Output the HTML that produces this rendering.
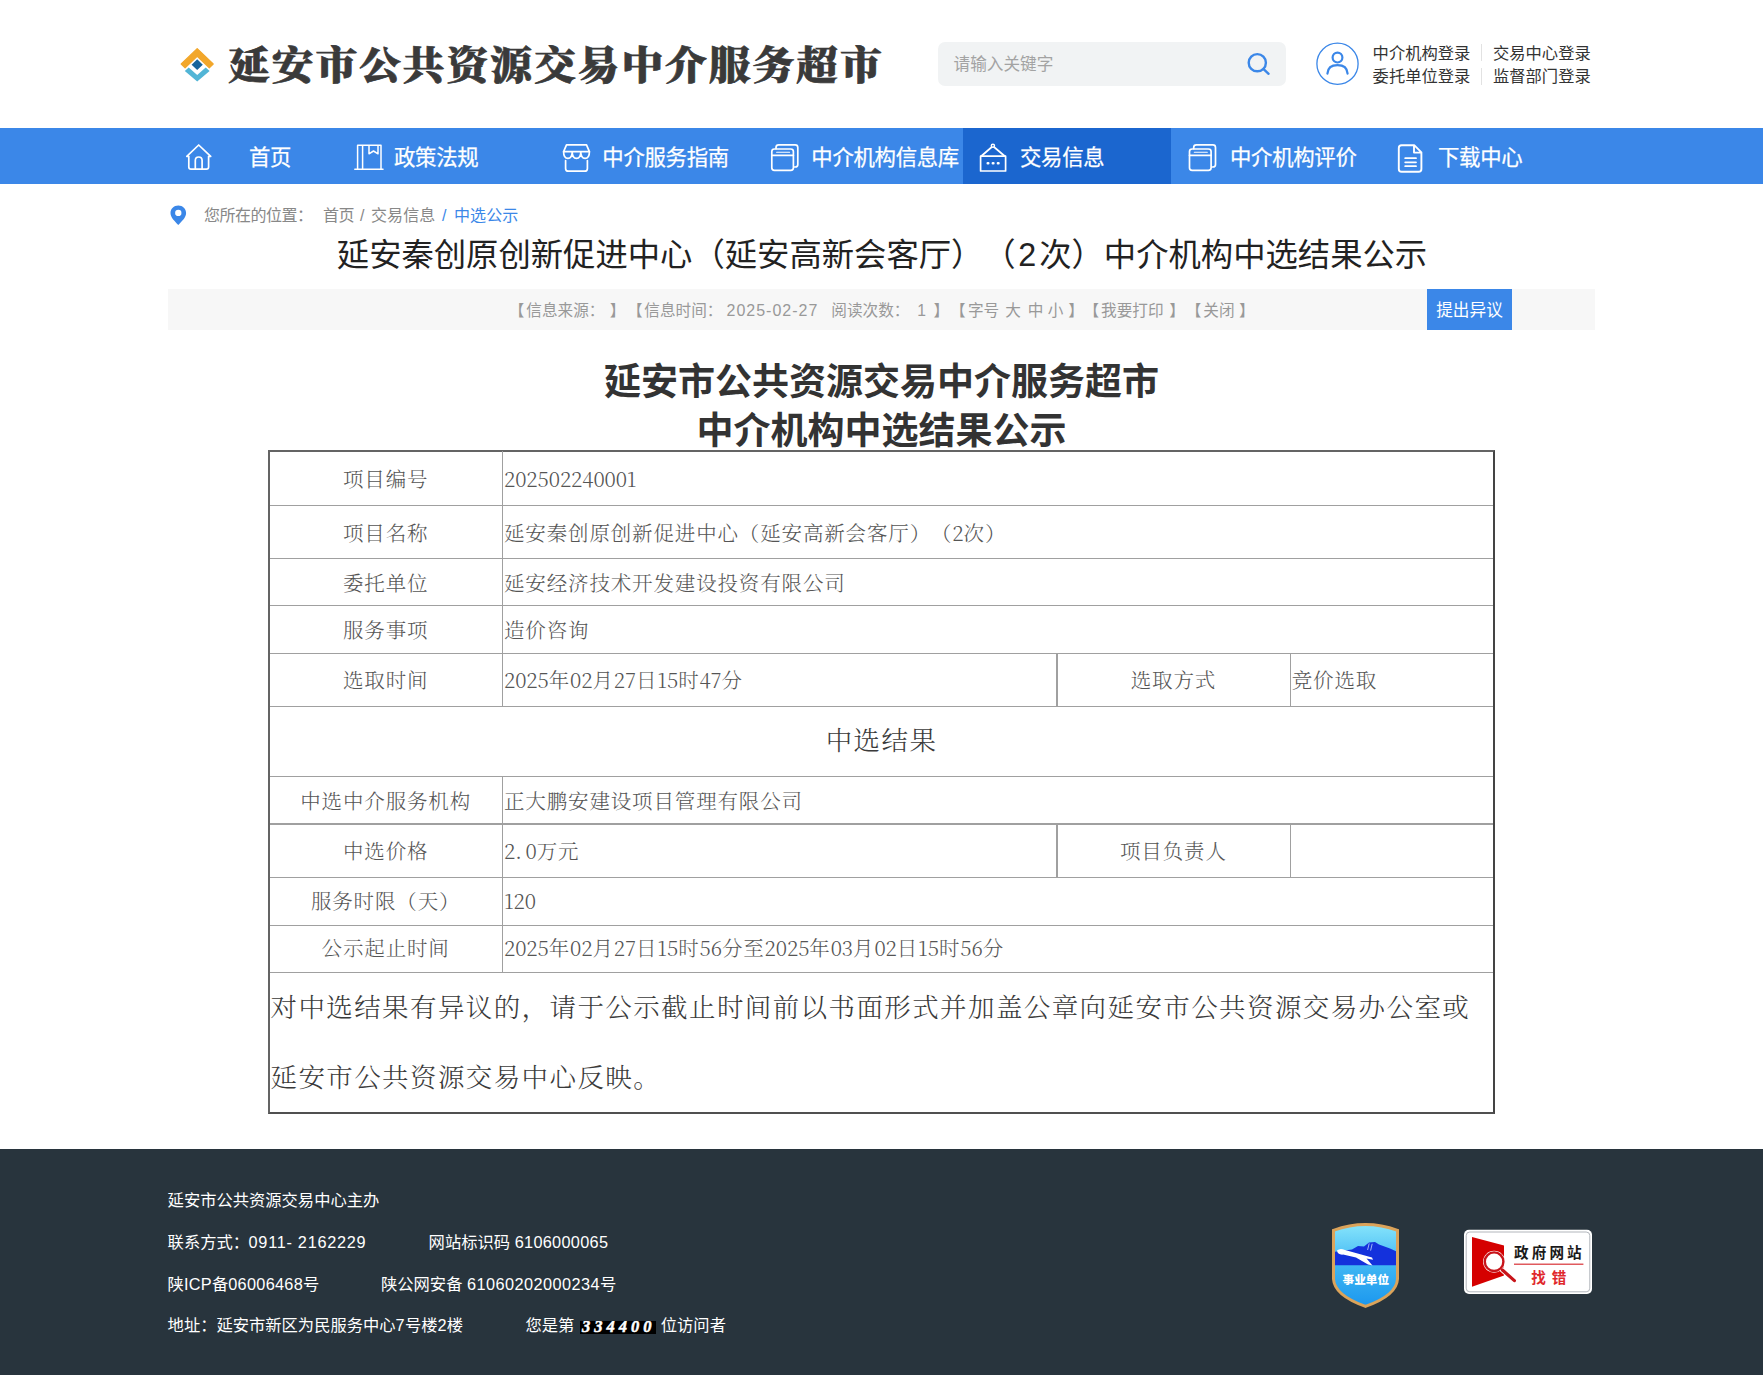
<!DOCTYPE html>
<html lang="zh-CN">
<head>
<meta charset="utf-8">
<title>延安市公共资源交易中介服务超市</title>
<style>
*{margin:0;padding:0;box-sizing:border-box;}
html,body{width:1763px;height:1375px;overflow:hidden;background:#fff;}
body{position:relative;font-family:"Liberation Sans","Noto Sans CJK SC",sans-serif;color:#333;}
.abs{position:absolute;white-space:nowrap;}
/* header */
#logo-ic{left:180px;top:47px;width:35px;height:38px;}
#logo-tx{left:227.6px;top:34px;font-family:"Liberation Serif","Noto Serif CJK SC",serif;font-weight:900;font-size:39px;line-height:64px;color:#3a3a3a;letter-spacing:1.85px;-webkit-text-stroke:0.7px #3a3a3a;transform:scaleX(1.07);transform-origin:0 0;}
#search{left:938px;top:42px;width:347.5px;height:44px;background:#f1f3f4;border-radius:7px;}
#search span{position:absolute;left:15.5px;top:1px;line-height:44px;font-size:16.65px;color:#a3a3a3;}
#search svg{position:absolute;left:307px;top:9px;}
#user{left:1314px;top:42px;width:44px;height:44px;}
.lg{font-size:16.3px;line-height:23px;color:#333;}
/* nav */
#nav{left:0;top:128px;width:1763px;height:55.6px;background:#3b87e8;}
#nav-act{left:962.8px;top:128px;width:208.7px;height:55.6px;background:#1b66cf;}
.nv{top:130px;line-height:56px;font-size:21.4px;color:#fff;letter-spacing:-0.3px;font-weight:400;-webkit-text-stroke:0.25px #fff;}
.ni{top:142px;width:30px;height:30px;}
/* crumbs */
.cr{top:205px;font-size:16px;line-height:22px;color:#888;letter-spacing:-0.5px;}
.cr.b{color:#3b87e8;}
#title{text-spacing-trim:space-all;left:336.8px;top:230px;font-size:32.35px;line-height:50px;color:#222;}
#bar{left:168px;top:288.7px;width:1427px;height:41.7px;background:#f7f7f7;}
.bt{top:289.5px;line-height:42px;font-size:15.65px;color:#999;text-spacing-trim:space-all;}
#btn{left:1427px;top:288.7px;width:85px;height:41.7px;background:#3b87e8;color:#fff;font-size:16.65px;line-height:43.5px;text-align:center;}
.h1{left:0;width:1763px;text-align:center;font-weight:700;font-size:37px;line-height:49px;color:#333;}
/* table */
#tb{left:268px;top:450px;width:1226.7px;height:663.8px;border:2px solid #555;border-color:#646464 #444 #505050 #646464;}
.hl{background:#a0a0a0;height:1.3px;left:270px;width:1223px;}
.vl{background:#a0a0a0;width:1.3px;}
.td{font-family:"Noto Serif CJK SC","Liberation Serif",serif;margin-top:1px;font-weight:300;font-size:20.5px;color:#555;letter-spacing:0.85px;text-spacing-trim:space-all;}
.tc{text-align:center;}
.d{letter-spacing:-0.1px;}
.big{font-family:"Liberation Serif","Noto Serif CJK SC",serif;font-weight:300;font-size:26.5px;color:#3a3a3a;letter-spacing:1.4px;text-spacing-trim:space-all;}
/* footer */
#foot{left:0;top:1148.7px;width:1763px;height:226.3px;background:#28343d;}
.ft{font-size:16.3px;color:#fff;line-height:24px;}
.n{letter-spacing:0.3px;}
</style>
</head>
<body>
<!-- HEADER -->
<svg id="logo-ic" class="abs" viewBox="0 0 35 38">
  <path d="M1.2 17 L17.2 1.6 L33.2 17 L29.3 20.8 L17.2 9.2 L5.1 20.8 Z" fill="#f2a72b" stroke="#f2a72b" stroke-width="1.2" stroke-linejoin="round"/>
  <path d="M17.2 12.3 L22.8 17.7 L17.2 23.1 L11.6 17.7 Z" fill="#17649b"/>
  <path d="M4.8 24 L8.7 20.4 L17.2 28 L25.7 20.4 L29.6 24 L17.2 34.6 Z" fill="#52b5d6"/>
</svg>
<div id="logo-tx" class="abs">延安市公共资源交易中介服务超市</div>
<div id="search" class="abs"><span>请输入关键字</span></div>
<svg class="abs" style="left:1244px;top:50px;" width="30" height="30" viewBox="0 0 30 30" fill="none" stroke="#3b87e8" stroke-width="2.4" stroke-linecap="round"><circle cx="13.3" cy="12.7" r="8.6"/><path d="M19.6 19.2 L24.6 23.8"/></svg>
<svg class="abs" style="left:1314px;top:40px;" width="48" height="48" viewBox="0 0 48 48" fill="none" stroke="#3b87e8"><circle cx="23.5" cy="23.75" r="20.6" stroke-width="1.3"/><circle cx="23.5" cy="17.6" r="4.9" stroke-width="2.2"/><path d="M13.4 33.6 C13.8 27.8 18 25.2 23.5 25.2 C29 25.2 33.2 27.8 33.6 33.6" stroke-width="2.2" stroke-linecap="round"/></svg>
<div class="abs lg" style="left:1372.6px;top:42px;">中介机构登录</div>
<div class="abs lg" style="left:1493px;top:42px;">交易中心登录</div>
<div class="abs lg" style="left:1372.6px;top:65.3px;">委托单位登录</div>
<div class="abs lg" style="left:1493px;top:65.3px;">监督部门登录</div>
<div class="abs" style="left:1481.3px;top:44px;width:1px;height:17px;background:#e2e2e2;"></div>
<div class="abs" style="left:1481.3px;top:67.5px;width:1px;height:17px;background:#e2e2e2;"></div>

<!-- NAV -->
<div id="nav" class="abs"></div>
<div id="nav-act" class="abs"></div>
<svg class="abs" style="left:0;top:128px;" width="1763" height="56" viewBox="0 128 1763 56" fill="none" stroke="#fff" stroke-width="1.7" stroke-linejoin="round" stroke-linecap="round">
  <!-- home -->
  <path d="M198.7 145 L210.7 156.3 L208.6 156.3 L208.6 167 Q208.6 169.2 206.4 169.2 L191 169.2 Q188.8 169.2 188.8 167 L188.8 156.3 L186.8 156.3 Z"/>
  <path d="M195.3 169 L195.3 160.5 Q195.3 157 198.7 157 Q202.1 157 202.1 160.5 L202.1 169"/>
  <!-- book -->
  <path d="M354.8 169.3 L383 169.3 M357.6 169 L357.6 145.2 L381 145.2 L381 169 M362.6 145.2 L362.6 169 M369 145.4 L369 153.8 L373.5 151 L378 153.8 L378 145.4" stroke-width="1.5"/>
  <!-- shop -->
  <path d="M566.5 144.8 L586.5 144.8 L589.4 151.6 L563.6 151.6 Z"/>
  <path d="M563.6 151.8 Q563.6 158.4 567.9 158.4 Q572.2 158.4 572.2 151.8 Q572.2 158.4 576.5 158.4 Q580.8 158.4 580.8 151.8 Q580.8 158.4 585.1 158.4 Q589.4 158.4 589.4 151.8"/>
  <path d="M565.6 160.5 L565.6 168.4 Q565.6 171.2 568.4 171.2 L584.6 171.2 Q587.4 171.2 587.4 168.4 L587.4 160.5"/>
  <!-- window 1 -->
  <g id="win"><rect x="771.8" y="149" width="21.6" height="21.4" rx="2.6"/><path d="M771.8 155.3 L793.4 155.3"/><path d="M776 148.6 L776 147.4 Q776 144.8 778.6 144.8 L795.2 144.8 Q797.8 144.8 797.8 147.4 L797.8 164.4 Q797.8 167 795.2 167 L794 167"/><path d="M776.6 152.2 L789.6 152.2" stroke-width="1.1"/></g>
  <!-- sign -->
  <circle cx="992.9" cy="145.8" r="1.6" stroke-width="1.4"/>
  <path d="M991.8 147 L981.4 156 M994 147 L1004.6 156"/>
  <path d="M980.6 156.2 L1005.6 156.2 L1005.6 171 L980.6 171 Z"/>
  <path d="M987.7 163.3 L988.3 163.3 M992.8 163.3 L993.4 163.3 M997.9 163.3 L998.5 163.3" stroke-width="2.5"/>
  <!-- window 2 -->
  <g transform="translate(417.7 0)"><rect x="771.8" y="149" width="21.6" height="21.4" rx="2.6"/><path d="M771.8 155.3 L793.4 155.3"/><path d="M776 148.6 L776 147.4 Q776 144.8 778.6 144.8 L795.2 144.8 Q797.8 144.8 797.8 147.4 L797.8 164.4 Q797.8 167 795.2 167 L794 167"/><path d="M776.6 152.2 L789.6 152.2" stroke-width="1.1"/></g>
  <!-- doc -->
  <path d="M1401.6 145.2 L1414.2 145.2 L1421.4 152.4 L1421.4 169 Q1421.4 171.8 1418.6 171.8 L1401.6 171.8 Q1398.8 171.8 1398.8 169 L1398.8 148 Q1398.8 145.2 1401.6 145.2 Z M1414 145.6 L1414 152.6 L1421 152.6" stroke-width="1.9"/>
  <path d="M1405.2 158.2 L1416 158.2 M1405.2 162.3 L1416 162.3 M1405.2 166.2 L1416 166.2" stroke-width="1.8"/>
</svg>
<div class="abs nv" style="left:249px;">首页</div>
<div class="abs nv" style="left:394px;">政策法规</div>
<div class="abs nv" style="left:602.3px;">中介服务指南</div>
<div class="abs nv" style="left:811.3px;">中介机构信息库</div>
<div class="abs nv" style="left:1020px;">交易信息</div>
<div class="abs nv" style="left:1230px;">中介机构评价</div>
<div class="abs nv" style="left:1438px;">下载中心</div>

<!-- BREADCRUMB / TITLE -->
<svg class="abs" style="left:168.7px;top:203.5px;" width="18.6" height="22.3" viewBox="0 0 20 24"><path d="M10 1.5 C5.2 1.5 1.6 5 1.6 9.6 C1.6 14.6 6.5 18.6 10 22.6 C13.5 18.6 18.4 14.6 18.4 9.6 C18.4 5 14.8 1.5 10 1.5 Z" fill="#3b87e8"/><circle cx="10" cy="9.6" r="3.4" fill="#fff"/></svg>
<div class="abs cr" style="left:204px;">您所在的位置：</div><div class="abs cr" style="left:323px;">首页</div><div class="abs cr" style="left:360px;">/</div><div class="abs cr" style="left:371px;letter-spacing:0.1px;">交易信息</div><div class="abs cr b" style="left:442px;">/</div><div class="abs cr b" style="left:454px;letter-spacing:0.1px;">中选公示</div>
<div id="title" class="abs">延安秦创原创新促进中心（延安高新会客厅）（<span style="margin:0 3px 0 2.5px;">2</span>次）中介机构中选结果公示</div>
<div id="bar" class="abs"></div>
<div class="abs bt" style="left:508.7px;">【</div><div class="abs bt" style="left:526.3px;">信息来源：</div><div class="abs bt" style="left:609.7px;">】</div><div class="abs bt" style="left:627.0px;">【</div><div class="abs bt" style="left:644.3px;">信息时间：</div><div class="abs bt" style="left:726.5px;"><span style="letter-spacing:1px;font-size:16px;">2025-02-27</span></div><div class="abs bt" style="left:831.3px;">阅读次数：</div><div class="abs bt" style="left:917.3px;">1</div><div class="abs bt" style="left:933.4px;">】</div><div class="abs bt" style="left:950.0px;">【</div><div class="abs bt" style="left:967.9px;">字号</div><div class="abs bt" style="left:1005.3px;">大</div><div class="abs bt" style="left:1027.8px;">中</div><div class="abs bt" style="left:1047.8px;">小</div><div class="abs bt" style="left:1068.2px;">】</div><div class="abs bt" style="left:1083.4px;">【</div><div class="abs bt" style="left:1101.0px;">我要打印</div><div class="abs bt" style="left:1169.2px;">】</div><div class="abs bt" style="left:1185.7px;">【</div><div class="abs bt" style="left:1203.3px;">关闭</div><div class="abs bt" style="left:1239.1px;">】</div>
<div id="btn" class="abs">提出异议</div>
<div class="abs h1" style="top:357.6px;">延安市公共资源交易中介服务超市</div>
<div class="abs h1" style="top:406.8px;">中介机构中选结果公示</div>

<!-- TABLE -->
<div id="tb" class="abs"></div>
<div class="abs hl" style="top:504.85px;"></div>
<div class="abs hl" style="top:557.85px;"></div>
<div class="abs hl" style="top:605.15px;"></div>
<div class="abs hl" style="top:652.65px;"></div>
<div class="abs hl" style="top:705.65px;"></div>
<div class="abs hl" style="top:775.75px;"></div>
<div class="abs hl" style="top:823.35px;"></div>
<div class="abs hl" style="top:876.75px;"></div>
<div class="abs hl" style="top:924.55px;"></div>
<div class="abs hl" style="top:971.65px;"></div>
<div class="abs vl" style="left:501.8px;top:451.3px;height:255.1px;"></div>
<div class="abs vl" style="left:501.8px;top:776.5px;height:195.5px;"></div>
<div class="abs vl" style="left:1056.3px;top:653.0px;height:53.4px;"></div>
<div class="abs vl" style="left:1289.5px;top:653.0px;height:53.4px;"></div>
<div class="abs vl" style="left:1056.3px;top:824.0px;height:53.0px;"></div>
<div class="abs vl" style="left:1289.5px;top:824.0px;height:53.0px;"></div>
<div class="abs td tc" style="left:269.0px;width:233.3px;top:451.3px;line-height:53.7px;">项目编号</div>
<div class="abs td" style="left:504.0px;top:451.3px;line-height:53.7px;"><span class="d">202502240001</span></div>
<div class="abs td tc" style="left:269.0px;width:233.3px;top:505.0px;line-height:53.7px;">项目名称</div>
<div class="abs td" style="left:504.0px;top:505.0px;line-height:53.7px;">延安秦创原创新促进中心（延安高新会客厅）（<span class="d">2</span>次）</div>
<div class="abs td tc" style="left:269.0px;width:233.3px;top:557.7px;line-height:47.3px;">委托单位</div>
<div class="abs td" style="left:504.0px;top:557.7px;line-height:47.3px;">延安经济技术开发建设投资有限公司</div>
<div class="abs td tc" style="left:269.0px;width:233.3px;top:604.5px;line-height:47.0px;">服务事项</div>
<div class="abs td" style="left:504.0px;top:604.5px;line-height:47.0px;">造价咨询</div>
<div class="abs td tc" style="left:269.0px;width:233.3px;top:651.6px;line-height:53.4px;">选取时间</div>
<div class="abs td" style="left:504.0px;top:651.6px;line-height:53.4px;"><span class="d">2025</span>年<span class="d">02</span>月<span class="d">27</span>日<span class="d">15</span>时<span class="d">47</span>分</div>
<div class="abs td tc" style="left:1056.8px;width:233.2px;top:651.6px;line-height:53.4px;">选取方式</div>
<div class="abs td" style="left:1291.7px;top:651.6px;line-height:53.4px;">竞价选取</div>
<div class="abs big tc" style="left:269px;width:1225px;top:706.4px;line-height:70.1px;">中选结果</div>
<div class="abs td tc" style="left:269.0px;width:233.3px;top:775.5px;line-height:47.5px;">中选中介服务机构</div>
<div class="abs td" style="left:504.0px;top:775.5px;line-height:47.5px;">正大鹏安建设项目管理有限公司</div>
<div class="abs td tc" style="left:269.0px;width:233.3px;top:822.8px;line-height:53.0px;">中选价格</div>
<div class="abs td" style="left:504.0px;top:822.8px;line-height:53.0px;"><span class="d">2<span style="letter-spacing:3.6px;">.</span>0</span>万元</div>
<div class="abs td tc" style="left:1056.8px;width:233.2px;top:822.8px;line-height:53.0px;">项目负责人</div>
<div class="abs td tc" style="left:269.0px;width:233.3px;top:874.5px;line-height:48.0px;">服务时限（天）</div>
<div class="abs td" style="left:504.0px;top:874.5px;line-height:48.0px;"><span class="d">120</span></div>
<div class="abs td tc" style="left:269.0px;width:233.3px;top:923.2px;line-height:47.0px;">公示起止时间</div>
<div class="abs td" style="left:504.0px;top:923.2px;line-height:47.0px;"><span class="d">2025</span>年<span class="d">02</span>月<span class="d">27</span>日<span class="d">15</span>时<span class="d">56</span>分至<span class="d">2025</span>年<span class="d">03</span>月<span class="d">02</span>日<span class="d">15</span>时<span class="d">56</span>分</div>
<div class="abs big" style="left:270.5px;top:973px;line-height:70px;">对中选结果有异议的，请于公示截止时间前以书面形式并加盖公章向延安市公共资源交易办公室或</div>
<div class="abs big" style="left:270.5px;top:1043.3px;line-height:70px;">延安市公共资源交易中心反映。</div>

<!-- FOOTER -->
<div id="foot" class="abs"></div>
<div class="abs ft" style="left:167.6px;top:1188.3px;">延安市公共资源交易中心主办</div>
<div class="abs ft" style="left:167.6px;top:1229.6px;">联系方式：</div>
<div class="abs ft n" style="left:248.6px;top:1229.6px;letter-spacing:0.72px;">0911- 2162229</div>
<div class="abs ft" style="left:428.6px;top:1229.6px;">网站标识码</div>
<div class="abs ft n" style="left:514.7px;top:1229.6px;">6106000065</div>
<div class="abs ft" style="left:167.6px;top:1271.5px;">陕<span class="n">ICP</span>备<span class="n">06006468</span>号</div>
<div class="abs ft" style="left:381px;top:1271.5px;">陕公网安备</div>
<div class="abs ft" style="left:467px;top:1271.5px;"><span class="n" style="letter-spacing:0.45px;">61060202000234</span>号</div>
<div class="abs ft" style="left:167.6px;top:1313.4px;">地址：延安市新区为民服务中心<span class="n">7</span>号楼<span class="n">2</span>楼</div>
<div class="abs ft" style="left:525.4px;top:1313.4px;">您是第</div>
<div class="abs" style="left:579.6px;top:1321px;width:76.7px;height:12.6px;background:#000;color:#fff;font-family:'Liberation Serif',serif;font-style:italic;font-weight:700;font-size:16.5px;line-height:12.8px;letter-spacing:4px;padding-left:2.5px;overflow:hidden;-webkit-text-stroke:0.5px #fff;">334400</div>
<div class="abs ft" style="left:660.8px;top:1313.4px;">位访问者</div>
<svg class="abs" style="left:1326px;top:1218px;" width="80" height="96" viewBox="1326 1218 80 96">
  <defs>
    <linearGradient id="sg" x1="0" y1="0" x2="0" y2="1"><stop offset="0" stop-color="#86e4fb"/><stop offset="0.5" stop-color="#3fb6f3"/><stop offset="1" stop-color="#1b97ee"/></linearGradient>
    <clipPath id="sc"><path d="M1335 1231.6 Q1365.5 1220.5 1396 1231.6 L1396 1279 Q1395 1294 1365.5 1304.6 Q1336 1294 1335 1279 Z"/></clipPath>
  </defs>
  <path d="M1333.5 1230.4 Q1365.5 1218.6 1397.5 1230.4 L1397.5 1279 Q1396.6 1295.4 1365.5 1306.4 Q1334.4 1295.4 1333.5 1279 Z" fill="url(#sg)" stroke="#dba35a" stroke-width="3"/>
  <g clip-path="url(#sc)">
    <path d="M1334 1252 L1352 1249.5 L1358 1246 L1364 1246.5 L1369 1242.5 L1375 1242 L1379 1244.5 L1390 1248.5 L1396.5 1251.5 L1396.5 1265.2 L1334 1265.2 Z" fill="#1431dc"/>
    <path d="M1337 1250.5 Q1340 1247.6 1345 1250 L1372 1257.4 L1373 1259.8 L1366.5 1258.6 L1372.5 1265.4 L1368 1264.6 L1356 1257.6 L1343 1254.6 Q1337.5 1255 1337 1250.5 Z" fill="#fff"/>
    <path d="M1367.6 1250 L1369.2 1243.4 M1370.6 1250.6 L1372.2 1243.8" stroke="#9fb4f5" stroke-width="1"/>
  </g>
  <text x="1365.8" y="1283.8" text-anchor="middle" font-family="'Liberation Sans','Noto Sans CJK SC',sans-serif" font-weight="900" font-size="11.6" fill="#fff">事业单位</text>
</svg>
<svg class="abs" style="left:1460px;top:1226px;" width="136" height="72" viewBox="1460 1226 136 72">
  <rect x="1464" y="1229.8" width="128" height="64.2" rx="5" fill="#fff"/>
  <rect x="1466.2" y="1232" width="123.6" height="59.8" rx="3.6" fill="none" stroke="#a9aeb3" stroke-width="0.9"/>
  <path d="M1472 1237 L1504 1245.6 L1504 1275.4 L1472 1286.8 Z" fill="#d50000"/>
  <circle cx="1494.1" cy="1261.7" r="11" fill="#fff"/>
  <path d="M1502 1269.6 L1514.6 1280.8" stroke="#fff" stroke-width="5.2" stroke-linecap="round"/>
  <circle cx="1494.1" cy="1261.7" r="9.3" fill="#fff" stroke="#c8141a" stroke-width="2.4"/>
  <path d="M1502.4 1270 L1514.4 1280.6" stroke="#c8141a" stroke-width="3.2" stroke-linecap="round"/>
  <text x="1514" y="1257.6" font-family="'Liberation Sans','Noto Sans CJK SC',sans-serif" font-weight="700" font-size="14.6" letter-spacing="3.1" fill="#1a1a1a">政府网站</text>
  <rect x="1514" y="1263.5" width="69.4" height="1.5" fill="#e05a5e"/>
  <text x="1531.2" y="1283.4" font-family="'Liberation Sans','Noto Sans CJK SC',sans-serif" font-weight="700" font-size="14.6" letter-spacing="6" fill="#e0282c">找错</text>
</svg>
</body>
</html>
